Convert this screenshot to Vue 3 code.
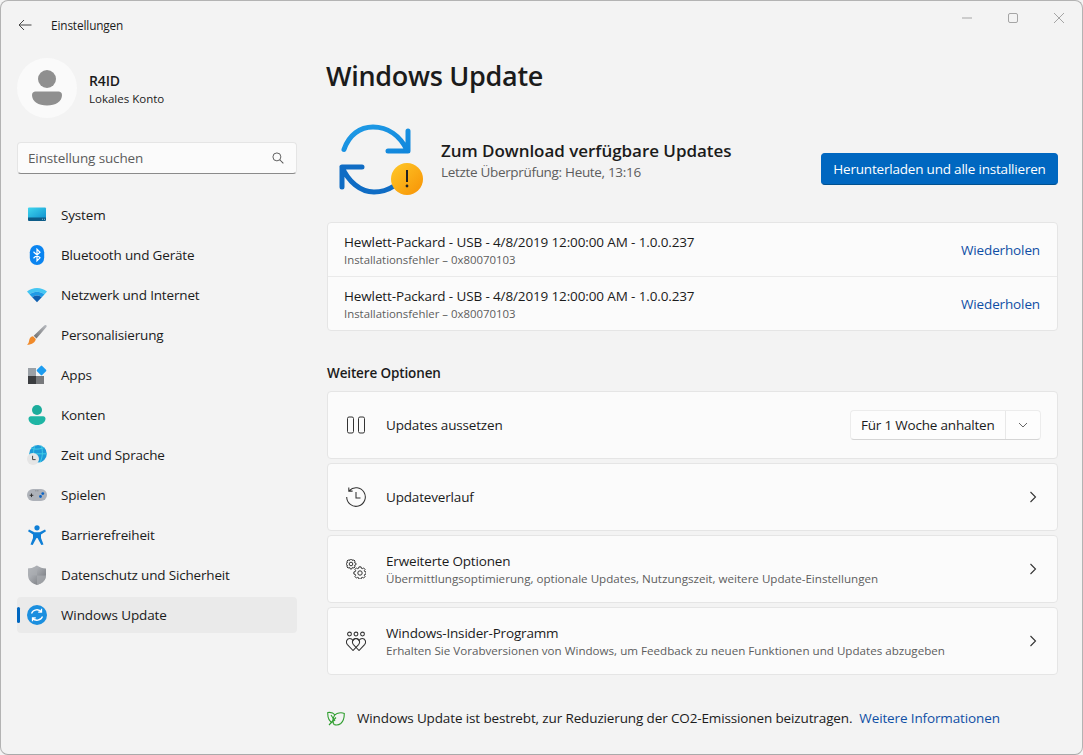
<script setup>
function gear(cx, cy, R, r, n) {
  const pts = []
  const step = (Math.PI * 2) / n
  for (let i = 0; i < n; i++) {
    const a = i * step
    const list = [[r, -0.34], [R, -0.2], [R, 0.2], [r, 0.34]]
    for (const [rad, off] of list) {
      const t = a + off * step * 1.1
      pts.push((cx + rad * Math.cos(t)).toFixed(2) + ' ' + (cy + rad * Math.sin(t)).toFixed(2))
    }
  }
  return 'M' + pts.join('L') + 'Z'
}
const gearSmall = gear(5, 5, 5, 3.9, 8)
const gearLarge = gear(14, 14, 6.2, 4.9, 8)

const moreCards = [
  { title: 'Updateverlauf', sub: '', icon: 'history' },
  { title: 'Erweiterte Optionen', sub: 'Übermittlungsoptimierung, optionale Updates, Nutzungszeit, weitere Update-Einstellungen', icon: 'gears' },
  { title: 'Windows-Insider-Programm', sub: 'Erhalten Sie Vorabversionen von Windows, um Feedback zu neuen Funktionen und Updates abzugeben', icon: 'insider' }
]
</script>

<template>
  <div class="window">
    <header class="titlebar">
      <svg class="back" width="16" height="16" viewBox="0 0 16 16"><path d="M14.5 8H2M7 3L2 8l5 5" fill="none" stroke="#444" stroke-width="1"/></svg>
      <span class="app-title">Einstellungen</span>
      <div class="controls">
        <svg width="12" height="12" viewBox="0 0 12 12"><path d="M1 6h10" stroke="#a5a5a5" stroke-width="1"/></svg>
        <svg width="12" height="12" viewBox="0 0 12 12"><rect x="1.5" y="1.5" width="9" height="9" rx="1.5" fill="none" stroke="#a5a5a5"/></svg>
        <svg width="12" height="12" viewBox="0 0 12 12"><path d="M1 1l10 10M11 1L1 11" stroke="#a5a5a5" stroke-width="1"/></svg>
      </div>
    </header>

    <div class="body">
      <aside class="sidebar">
        <div class="profile">
          <div class="avatar">
            <svg width="30" height="36" viewBox="0 0 30 36"><circle cx="15" cy="9" r="9" fill="#8f8f8f"/><path d="M0 25c0-2 1.500-3.500 3.500-3.500h23c2 0 3.500 1.500 3.500 3.500 0 6.500-6.500 10.500-15 10.500S0 31.500 0 25z" fill="#8f8f8f"/></svg>
          </div>
          <div class="who">
            <div class="name">R4ID</div>
            <div class="account">Lokales Konto</div>
          </div>
        </div>

        <div class="search">
          <span>Einstellung suchen</span>
          <svg width="12" height="12" viewBox="0 0 13 13"><circle cx="5.300" cy="5.300" r="4.300" fill="none" stroke="#555" stroke-width="1"/><path d="M8.400 8.400L12.300 12.300" stroke="#555" stroke-width="1.100"/></svg>
        </div>

        <nav class="nav">
          <div class="nav-item">
            <svg class="nav-icon" viewBox="0 0 20 20">
              <defs><linearGradient id="sys" x1="0" y1="0" x2="1" y2="1"><stop offset="0" stop-color="#3fd6ee"/><stop offset="1" stop-color="#1192cf"/></linearGradient></defs>
              <rect x="1" y="2.500" width="18" height="11" fill="url(#sys)" rx="1"/>
              <path d="M1 12.500h18v2.500a1 1 0 0 1-1 1H2a1 1 0 0 1-1-1z" fill="#0d5c88"/>
              <path d="M15 14.300h1M17 14.300h1" stroke="#9fd4e8" stroke-width=".8"/>
            </svg>
            <span>System</span>
          </div>
          <div class="nav-item">
            <svg class="nav-icon" viewBox="0 0 20 20">
              <rect x="2.800" y="0" width="14.400" height="20" rx="7.200" fill="#0a84f0"/>
              <path d="M6.500 6.800l6.500 6-3 3V4.300l3 3-6.500 6" fill="none" stroke="#fff" stroke-width="1.200"/>
            </svg>
            <span>Bluetooth und Geräte</span>
          </div>
          <div class="nav-item">
            <svg class="nav-icon" viewBox="0 0 20 20">
              <path d="M0 6.500C5.500 1.700 14.500 1.700 20 6.500l-2.600 2.900C13 5.700 7 5.700 2.600 9.400z" fill="#45c6f2"/>
              <path d="M2.600 9.400C7 5.700 13 5.700 17.400 9.400L14.800 12.200C12 9.900 8 9.900 5.200 12.200z" fill="#1f9be6"/>
              <path d="M5.200 12.200C8 9.900 12 9.900 14.800 12.200L10 17.200z" fill="#0d5fb0"/>
            </svg>
            <span>Netzwerk und Internet</span>
          </div>
          <div class="nav-item">
            <svg class="nav-icon" viewBox="0 0 20 20">
              <defs><linearGradient id="brush" x1="0" y1="1" x2="1" y2="0"><stop offset="0" stop-color="#6f6f6f"/><stop offset="1" stop-color="#b9bcc2"/></linearGradient></defs>
              <path d="M19.300 0.300c.6.500.5 1.300-.1 2L9.500 13.400l-2.800-2.700L17.300.5c.7-.6 1.500-.7 2-.2z" fill="url(#brush)"/>
              <path d="M6 11.200l2.800 2.700c-.5 3.200-3.500 5.800-8.800 5.800 2.200-1.300 1.700-3.500 2.500-5.700.6-1.600 2-2.700 3.500-2.800z" fill="#f08a2a"/>
            </svg>
            <span>Personalisierung</span>
          </div>
          <div class="nav-item">
            <svg class="nav-icon" viewBox="0 0 20 20">
              <rect x="1" y="3" width="8" height="8" fill="#9aa0a6"/>
              <rect x="1" y="11" width="8" height="8" fill="#3b3d40"/>
              <rect x="9" y="11" width="8" height="8" fill="#77797c"/>
              <rect x="10.800" y="1.800" width="7.400" height="7.400" rx="1" transform="rotate(45 14.500 5.500)" fill="#1c9cf0"/>
            </svg>
            <span>Apps</span>
          </div>
          <div class="nav-item">
            <svg class="nav-icon" viewBox="0 0 20 20">
              <circle cx="10" cy="5" r="5" fill="#1bac9c"/>
              <path d="M1.500 13.500c0-1.300 1-2.300 2.300-2.300h12.400c1.300 0 2.300 1 2.300 2.300 0 4-4 6.500-8.500 6.500s-8.500-2.500-8.500-6.500z" fill="#1eb5a4"/>
            </svg>
            <span>Konten</span>
          </div>
          <div class="nav-item">
            <svg class="nav-icon" viewBox="0 0 20 20">
              <circle cx="11" cy="8.800" r="8.800" fill="#1d9ad8"/>
              <path d="M4 3c4 2 10 1 13-.5M8 .5c-2 5-2 11 1 17M14 .5c2 5 2 11-1 17M2.300 8.800h17.500" stroke="#45d0e8" stroke-width=".9" fill="none"/>
              <circle cx="6" cy="14" r="6" fill="#e5e5e5"/>
              <path d="M5.600 10.800v3.800h3" fill="none" stroke="#444" stroke-width="1"/>
            </svg>
            <span>Zeit und Sprache</span>
          </div>
          <div class="nav-item">
            <svg class="nav-icon" viewBox="0 0 20 20">
              <rect x="0" y="4" width="20" height="12" rx="6" fill="#aeb2b9"/>
              <path d="M4.500 8.500v3.600M2.700 10.300h3.600" stroke="#333" stroke-width="1"/>
              <circle cx="13.500" cy="11.500" r="1.400" fill="#0b63c4"/>
              <circle cx="15.800" cy="8.600" r="1.400" fill="#0b63c4"/>
              <path d="M8.500 5.800h.8M10.500 5.800h.8" stroke="#555" stroke-width=".7"/>
            </svg>
            <span>Spielen</span>
          </div>
          <div class="nav-item">
            <svg class="nav-icon" viewBox="0 0 20 20">
              <circle cx="10" cy="2.800" r="2.600" fill="#0f7fd6"/>
              <path d="M2 4.500l5.500 2.800h5L18 4.500l1 1.800-5 3.200v3.500l2.500 6.500-2.200.5L10.500 13h-1L5.700 20l-2.200-.5L6 13V9.500L1 6.300z" fill="#0f7fd6"/>
            </svg>
            <span>Barrierefreiheit</span>
          </div>
          <div class="nav-item">
            <svg class="nav-icon" viewBox="0 0 20 20">
              <defs><linearGradient id="shield" x1="0" y1="0" x2="1" y2="1"><stop offset="0" stop-color="#c8cbd0"/><stop offset="1" stop-color="#6d7075"/></linearGradient></defs>
              <path d="M10 .5c3 2 5.500 2.800 9 3v6.500c0 5-3.500 8.500-9 10-5.500-1.500-9-5-9-10V3.500c3.500-.2 6-1 9-3z" fill="url(#shield)"/>
              <path d="M10 .5V10.500H1V3.500C4.500 3.300 7 2.500 10 .5zM10 10.500h9c-.2 5-3.500 8-9 9.500z" fill="#a9acb1" opacity=".7"/>
            </svg>
            <span>Datenschutz und Sicherheit</span>
          </div>
          <div class="nav-item active">
            <span class="marker"></span>
            <svg class="nav-icon" viewBox="0 0 20 20">
              <circle cx="10" cy="10" r="10" fill="#1b8fdf"/>
              <path d="M4.500 8.500a5.800 5.800 0 0 1 10-1.500M14.500 3.800V7.200H11.200M15.500 11.500a5.800 5.800 0 0 1-10 1.500M5.500 16.200V12.800H8.800" fill="none" stroke="#fff" stroke-width="1.300"/>
            </svg>
            <span>Windows Update</span>
          </div>
        </nav>
      </aside>

      <main class="main">
        <h1>Windows Update</h1>

        <section class="hero">
          <svg class="hero-icon" width="86" height="72" viewBox="0 0 86 72">
            <defs>
              <linearGradient id="arrowTop" x1="0" y1="0" x2="1" y2="1"><stop offset="0" stop-color="#1f9be6"/><stop offset="1" stop-color="#1187dc"/></linearGradient>
              <linearGradient id="warn" x1="0" y1="0" x2="1" y2="1"><stop offset="0" stop-color="#ffc928"/><stop offset="1" stop-color="#f79205"/></linearGradient>
            </defs>
            <path d="M6 26.500C11 12 22 4 35 4c15 0 27 9 34 23M70 8v20H50" fill="none" stroke="url(#arrowTop)" stroke-width="5" stroke-linecap="round" stroke-linejoin="round"/>
            <path d="M4 64V44h20M4 44c6 14 18 25 32 25 8 0 14-2 20-6" fill="none" stroke="#0f6cc4" stroke-width="5" stroke-linecap="round" stroke-linejoin="round"/>
            <circle cx="69" cy="56" r="16" fill="url(#warn)"/>
            <path d="M69 47v12" stroke="#222" stroke-width="2"/>
            <circle cx="69" cy="63" r="1.400" fill="#222"/>
          </svg>
          <div class="hero-text">
            <div class="hero-title">Zum Download verfügbare Updates</div>
            <div class="hero-sub">Letzte Überprüfung: Heute, 13:16</div>
          </div>
          <button class="primary">Herunterladen und alle installieren</button>
        </section>

        <section class="update-list">
          <div class="update-row first">
            <div class="update-info">
              <div class="update-name">Hewlett-Packard - USB - 4/8/2019 12:00:00 AM - 1.0.0.237</div>
              <div class="update-err">Installationsfehler – 0x80070103</div>
            </div>
            <a class="link">Wiederholen</a>
          </div>
          <div class="update-row divided">
            <div class="update-info">
              <div class="update-name">Hewlett-Packard - USB - 4/8/2019 12:00:00 AM - 1.0.0.237</div>
              <div class="update-err">Installationsfehler – 0x80070103</div>
            </div>
            <a class="link">Wiederholen</a>
          </div>
        </section>

        <h2>Weitere Optionen</h2>

        <section class="cards">
          <div class="card">
            <svg class="card-icon" viewBox="0 0 20 20"><rect x="1.500" y="2" width="6" height="16" rx="1.500" fill="none" stroke="#333" stroke-width="1"/><rect x="12.500" y="2" width="6" height="16" rx="1.500" fill="none" stroke="#333" stroke-width="1"/></svg>
            <div class="card-text"><div class="card-title">Updates aussetzen</div></div>
            <div class="dropdown">
              <span class="dd-label">Für 1 Woche anhalten</span>
              <span class="dd-arrow"><svg width="10" height="6" viewBox="0 0 10 6"><path d="M1 1l4 4 4-4" fill="none" stroke="#666" stroke-width="1"/></svg></span>
            </div>
          </div>
          <div v-for="c in moreCards" :key="c.title" class="card">
            <svg v-if="c.icon === 'history'" class="card-icon" viewBox="0 0 20 20">
              <path d="M3.300 3.600A9.300 9.300 0 1 1 .7 10M2.800 .5v3.600h3.800M10 5v6h4.500" fill="none" stroke="#333" stroke-width="1.050"/>
            </svg>
            <svg v-else-if="c.icon === 'gears'" class="card-icon" viewBox="0 0 20 20">
              <g fill="none" stroke="#333" stroke-width="1">
                <path :d="gearSmall"/><circle cx="5" cy="5" r="1.800"/>
                <path :d="gearLarge"/><circle cx="14" cy="14" r="2.200"/>
              </g>
            </svg>
            <svg v-else class="card-icon" viewBox="0 0 20 20">
              <g fill="none" stroke="#333" stroke-width="1.050">
                <circle cx="3.500" cy="3" r="1.900"/><circle cx="10" cy="3" r="1.900"/><circle cx="16.500" cy="3" r="1.900"/>
                <path d="M7 19.500L1.200 13.300C-.6 10.800 1 7.500 3.700 7.500 5.100 7.500 6.300 8.300 7 9.500 7.700 8.300 8.900 7.500 10.300 7.500 13 7.500 14.600 10.800 12.800 13.300z"/>
                <path d="M13 19.500L7.200 13.300C5.400 10.800 7 7.500 9.700 7.500 11.100 7.500 12.300 8.300 13 9.500 13.700 8.300 14.900 7.500 16.300 7.500 19 7.500 20.600 10.800 18.800 13.300z"/>
              </g>
            </svg>
            <div class="card-text">
              <div class="card-title">{{ c.title }}</div>
              <div v-if="c.sub" class="card-sub">{{ c.sub }}</div>
            </div>
            <svg class="chev" width="8" height="12" viewBox="0 0 8 12"><path d="M1.500 1l5 5-5 5" fill="none" stroke="#333" stroke-width="1.100"/></svg>
          </div>
        </section>

        <footer class="foot">
          <svg width="18" height="16" viewBox="0 0 18 16"><g fill="none" stroke="#2f9e2f" stroke-width="1.100"><path d="M5.500 13C2 11 .5 7 .8 2.500 4 2 6.500 3 8 5"/><path d="M7 14.500c-2-4-1-9.500 3-11 3-1 5.500-.8 7.300 0 0 5-1 8-3.500 10-2 1.500-4.500 1.800-6.800 1z"/><path d="M2 15l7-7.500M4 5l4 6"/></g></svg>
          <span class="foot-text">Windows Update ist bestrebt, zur Reduzierung der CO2-Emissionen beizutragen.</span>
          <a class="link foot-link">Weitere Informationen</a>
        </footer>
      </main>
    </div>
  </div>
</template>

<style>
html, body { margin: 0; background: #f3f3f3; }
</style>

<style scoped>
.window {
  box-sizing: border-box;
  width: 1083px;
  height: 755px;
  background: #f3f3f3;
  border: 1px solid #b3b3b3;
  border-bottom-color: #aaa;
  border-radius: 8px;
  font-family: "Open Sans", "Noto Sans", sans-serif;
  font-size: 13.500px;
  letter-spacing: -0.13px;
  color: #1b1b1b;
  overflow: hidden;
  display: flex;
  flex-direction: column;
}
.titlebar {
  height: 49px;
  flex: none;
  display: flex;
  align-items: center;
  padding-left: 16px;
}
.back { margin-right: 18px; margin-top: -1px; }
.app-title { font-size: 11.800px; margin-top: -1px; }
.controls {
  margin-left: auto;
  margin-top: -16px;
  display: flex;
  gap: 34px;
  padding-right: 17px;
}
.body { flex: 1; display: flex; min-height: 0; }
.sidebar { width: 296px; flex: none; padding: 8px 0 0 16px; }
.profile { display: flex; align-items: center; gap: 12px; }
.avatar {
  width: 60px; height: 60px; border-radius: 50%;
  background: #fafafa;
  display: flex; align-items: center; justify-content: center;
}
.who { padding-top: 2px; }
.name { font-size: 14px; font-weight: 600; line-height: 19px; }
.account { font-size: 11.500px; line-height: 17px; letter-spacing: 0; }
.search {
  box-sizing: border-box;
  width: 280px; height: 32px;
  margin-top: 24px;
  padding: 0 12px 0 10px;
  background: #fbfbfb;
  border: 1px solid #e5e5e5;
  border-bottom-color: #8a8a8a;
  border-radius: 4px;
  display: flex; align-items: center; justify-content: space-between;
  color: #5c5c5c;
}
.nav { margin-top: 23px; width: 280px; display: flex; flex-direction: column; gap: 4px; }
.nav-item {
  position: relative;
  height: 36px;
  display: flex; align-items: center;
  padding-left: 10px;
  gap: 14px;
  border-radius: 4px;
  letter-spacing: -0.17px;
}
.nav-item.active { background: #eaeaea; letter-spacing: -0.1px; }
.marker {
  position: absolute; left: 0; top: 10px;
  width: 3px; height: 16px;
  background: #0067c0; border-radius: 2px;
}
.nav-icon { width: 20px; height: 20px; flex: none; }
.main { flex: 1; padding: 0 24px 0 14px; min-width: 0; }
h1 { margin: 8px 0 0 -1px; font-size: 27px; font-weight: 600; line-height: 36px; letter-spacing: -0.3px; }
.hero { display: flex; align-items: center; margin-top: 29px; height: 72px; }
.hero-icon { margin-left: 11px; flex: none; }
.hero-text { margin-left: 17px; flex: 1; padding-top: 4px; }
.hero-title { font-size: 17px; font-weight: 600; line-height: 22px; letter-spacing: -0.04px; }
.hero-sub { font-size: 13.500px; color: #5d5d5d; line-height: 20px; letter-spacing: -0.32px; }
.primary {
  box-sizing: border-box;
  width: 237px; height: 32px;
  margin-top: 20px;
  background: #0067c0;
  color: #fff;
  border: 1px solid #0067c0;
  border-bottom-color: #00508f;
  border-radius: 4px;
  font: inherit;
  letter-spacing: -0.2px;
  padding: 0;
}
.update-list {
  margin-top: 27px;
  background: #fbfbfb;
  border: 1px solid #e5e5e5;
  border-radius: 4px;
}
.update-row {
  box-sizing: border-box;
  height: 54px;
  display: flex; align-items: center; justify-content: space-between;
  padding: 0 17px 0 16px;
}
.update-row.first { height: 53px; }
.update-row.divided { border-top: 1px solid #eaeaea; }
.update-name { font-size: 13.500px; line-height: 20px; }
.update-err { font-size: 11.400px; color: #5d5d5d; line-height: 16px; letter-spacing: 0; }
.link { color: #0f4fa5; }
h2 { margin: 32px 0 0; font-size: 13.500px; font-weight: 600; line-height: 20px; letter-spacing: -0.13px; }
.cards { margin-top: 8px; display: flex; flex-direction: column; gap: 4px; }
.card {
  box-sizing: border-box;
  height: 68px;
  background: #fbfbfb;
  border: 1px solid #e5e5e5;
  border-radius: 4px;
  display: flex; align-items: center;
  padding: 0 16px 0 18px;
}
.card-icon { width: 20px; height: 20px; flex: none; margin-right: 20px; }
.card-text { flex: 1; min-width: 0; }
.card-title { line-height: 20px; letter-spacing: -0.17px; }
.card-sub { font-size: 11.620px; color: #5d5d5d; line-height: 16px; letter-spacing: 0; }
.dropdown {
  box-sizing: border-box;
  width: 191px; height: 30px;
  background: #fdfdfd;
  border: 1px solid #ececec;
  border-bottom-color: #d5d5d5;
  border-radius: 4px;
  display: flex; align-items: center;
}
.dd-label { flex: 1; padding-left: 10px; letter-spacing: -0.2px; }
.dd-arrow {
  width: 34px; height: 100%;
  border-left: 1px solid #e8e8e8;
  display: flex; align-items: center; justify-content: center;
}
.chev { margin-right: 4px; }
.foot { display: flex; align-items: center; margin-top: 33px; height: 20px; }
.foot svg { margin-right: 12px; }
.foot-link { margin-left: 7px; }
</style>
